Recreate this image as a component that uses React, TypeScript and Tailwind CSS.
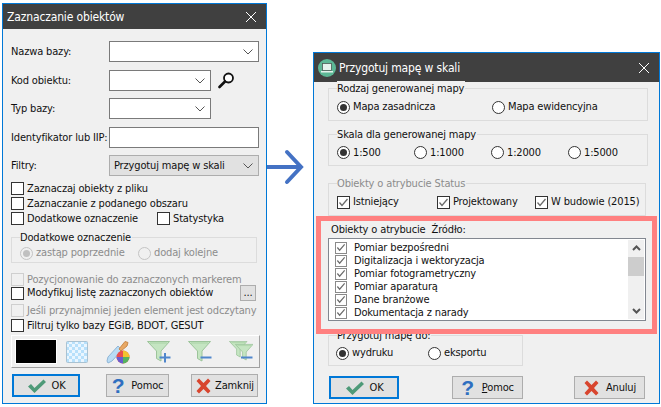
import React from "react";

const Chev = () => (
  <svg width="10" height="6" viewBox="0 0 10 6" className="shrink-0"><path d="M0.5 0.5 L5 5 L9.5 0.5" fill="none" stroke="#555" strokeWidth="1" /></svg>
);

const Combo = ({ w, text, gray }: { w: string; text?: string; gray?: boolean }) => (
  <div className={`${w} h-[21px] flex items-center justify-between pl-[4px] pr-[5px] border ${gray ? "bg-[#e1e1e1] border-[#adadad]" : "bg-white border-[#7a7a7a]"}`}>
    <span>{text}</span>
    <Chev />
  </div>
);

const Label = ({ text }: { text: string }) => <span className="w-[98px] shrink-0">{text}</span>;

const Check = ({ on, dim, small }: { on?: boolean; dim?: boolean; small?: boolean }) => (
  <span className={`${small ? "w-[12px] h-[12px] border-[#8a8a8a]" : "w-[13px] h-[13px]"} ${dim ? "border-[#cfcfcf] bg-[#f0f0f0]" : small ? "bg-white" : "border-[#333] bg-white"} border shrink-0 flex items-center justify-center`}>
    {on && (
      <svg width="11" height="11" viewBox="0 0 11 11"><path d="M1.5 5.5 L4 8.5 L9.5 2" fill="none" stroke="#6b6b6b" strokeWidth="1.3" /></svg>
    )}
  </span>
);

const CheckRow = ({ text, dim, cls }: { text: string; dim?: boolean; cls?: string }) => (
  <div className={`flex items-center h-[13px] gap-[3px] ${dim ? "text-[#8c8c8c]" : ""} ${cls ?? ""}`}>
    <Check dim={dim} />
    <span>{text}</span>
  </div>
);

const Radio = ({ on, dim, text, cls }: { on?: boolean; dim?: boolean; text: string; cls?: string }) => (
  <div className={`flex items-center gap-[3px] ${dim ? "text-[#8c8c8c]" : ""} ${cls ?? ""}`}>
    <span className={`w-[13px] h-[13px] rounded-full border shrink-0 flex items-center justify-center ${dim ? "border-[#c4c4c4] bg-[#f0f0f0]" : "border-[#333] bg-white"}`}>
      {on && <span className={`w-[7px] h-[7px] rounded-full ${dim ? "bg-[#c0c0c0]" : "bg-[#333]"}`} />}
    </span>
    <span>{text}</span>
  </div>
);

const Group = ({ title, dim, cls, children }: { title: string; dim?: boolean; cls: string; children: React.ReactNode }) => (
  <div className={`relative border border-[#dcdcdc] ${cls}`}>
    <span className={`absolute left-[8px] top-[-8px] leading-[16px] bg-[#f0f0f0] pr-[1px] ${dim ? "text-[#8c8c8c]" : ""}`}>{title}</span>
    {children}
  </div>
);

const CheckIcon = () => (
  <svg width="20" height="16" viewBox="0 0 20 16"><path d="M1 8.5 L4 6 L7.5 10 L16.5 1.5 L19 4 L7.5 15 Z" fill="#4e9a78" /></svg>
);
const XIcon = () => (
  <svg width="17" height="16" viewBox="0 0 17 16"><path d="M1.5 3 L4 0.5 L8.5 5 L13 0.5 L15.5 3 L11 8 L15.5 13 L13 15.5 L8.5 11 L4 15.5 L1.5 13 L6 8 Z" fill="#d8452e" /></svg>
);
const QIcon = () => (
  <span className="text-[#2f6fc0] font-bold text-[21px] leading-[20px] [font-family:'Liberation_Sans',sans-serif]">?</span>
);

const Btn = ({ cls, primary, icon, text, gap }: { cls: string; primary?: boolean; icon: React.ReactNode; text: React.ReactNode; gap: string }) => (
  <div className={`${cls} h-[23px] shrink-0 flex items-center justify-center ${gap} bg-[#e1e1e1] ${primary ? "border-2 border-[#0078d7]" : "border border-[#adadad]"}`}>
    {icon}
    <span>{text}</span>
  </div>
);

const TitleBar = ({ text, icon, h }: { text: string; icon?: React.ReactNode; h: string }) => (
  <div className={`${h} shrink-0 bg-[#404040] text-white flex items-center pl-[4px] pr-[9px] text-[12px]`}>
    {icon}
    <span className="flex-1">{text}</span>
    <svg width="12" height="12" viewBox="0 0 12 12"><path d="M1 1 L11 11 M11 1 L1 11" stroke="#fff" strokeWidth="1" /></svg>
  </div>
);

const Funnel = ({ x = 0, y = 0, s = 1 }: { x?: number; y?: number; s?: number }) => (
  <g transform={`translate(${x} ${y}) scale(${s})`}>
    <path d="M0.5 0.5 H22.5 L14 10 V20 L9.5 17.5 V10 Z" fill="#c5e5c2" stroke="#9cc49a" />
    <path d="M3 2 H20" stroke="#a9d3a6" />
  </g>
);

const items = ["Pomiar bezpośredni", "Digitalizacja i wektoryzacja", "Pomiar fotogrametryczny", "Pomiar aparaturą", "Dane branżowe", "Dokumentacja z narady"];

export default function App() {
  return (
    <div className="relative w-[661px] h-[407px] bg-white overflow-hidden text-[11px] leading-[14px] tracking-[-0.15px] text-[#111] whitespace-nowrap [font-family:'DejaVu_Sans_Condensed','DejaVu_Sans','Liberation_Sans',sans-serif]">
      {/* Left window */}
      <div className="absolute left-[2px] top-[3px] w-[265px] h-[401px] border border-[#0078d7] bg-[#f0f0f0] flex flex-col">
        <TitleBar text="Zaznaczanie obiektów" h="h-[25px]" />
        <div className="pl-[8px] flex flex-col">
          <div className="flex items-center mt-[12px]"><Label text="Nazwa bazy:" /><Combo w="w-[150px]" /></div>
          <div className="flex items-center mt-[8px]">
            <Label text="Kod obiektu:" /><Combo w="w-[102px]" />
            <svg width="17" height="17" viewBox="0 0 17 17" className="ml-[7px]">
              <circle cx="10.5" cy="6" r="4.5" fill="#fff" stroke="#111" strokeWidth="1.8" />
              <path d="M7 9.5 L1.5 15" stroke="#111" strokeWidth="2.6" strokeLinecap="round" />
            </svg>
          </div>
          <div className="flex items-center mt-[7px]"><Label text="Typ bazy:" /><Combo w="w-[102px]" /></div>
          <div className="flex items-center mt-[8px]"><Label text="Identyfikator lub IIP:" /><div className="w-[150px] h-[21px] bg-white border border-[#7a7a7a]" /></div>
          <div className="flex items-center mt-[7px]"><Label text="Filtry:" /><Combo w="w-[150px]" gray text="Przygotuj mapę w skali" /></div>
          <CheckRow text="Zaznaczaj obiekty z pliku" cls="mt-[6px]" />
          <CheckRow text="Zaznaczanie z podanego obszaru" cls="mt-[2px]" />
          <div className="flex mt-[2px]">
            <CheckRow text="Dodatkowe oznaczenie" cls="w-[146px]" />
            <CheckRow text="Statystyka" />
          </div>
          <Group title="Dodatkowe oznaczenie" cls="w-[246px] h-[26px] mt-[12px] flex items-end pb-[2px] pl-[8px]">
            <Radio dim on text="zastąp poprzednie" cls="w-[118px]" />
            <Radio dim text="dodaj kolejne" />
          </Group>
          <CheckRow text="Pozycjonowanie do zaznaczonych markerem" dim cls="mt-[10px]" />
          <div className="flex items-center justify-between w-[245px] mt-[-1px] h-[16px]">
            <CheckRow text="Modyfikuj listę zaznaczonych obiektów" />
            <div className="w-[16px] h-[16px] bg-[#e1e1e1] border border-[#adadad] flex items-center justify-center leading-[12px]">...</div>
          </div>
          <CheckRow text="Jeśli przynajmniej jeden element jest odczytany" dim cls="mt-[3px]" />
          <CheckRow text="Filtruj tylko bazy EGiB, BDOT, GESUT" cls="mt-[2px]" />
          <div className="w-[249px] h-[33px] mt-[3px] border border-t-white border-l-white border-r-[#a0a0a0] border-b-[#a0a0a0] flex items-center pl-[3px]">
            <div className="w-[42px] h-[25px] bg-black border border-white" />
            <svg width="22" height="22" viewBox="0 0 22 22" className="ml-[9px]">
              <defs>
                <pattern id="chk" width="6" height="6" patternUnits="userSpaceOnUse">
                  <rect width="6" height="6" fill="#eaf6ff" />
                  <rect width="3" height="3" fill="#b7e0fb" />
                  <rect x="3" y="3" width="3" height="3" fill="#b7e0fb" />
                </pattern>
              </defs>
              <rect x="0.5" y="0.5" width="21" height="21" rx="1" fill="url(#chk)" stroke="#a9c2d2" />
            </svg>
            <svg width="24" height="24" viewBox="0 0 24 24" className="ml-[18px]">
              <path d="M1 21 L2 17 L12 6 L16 10 L6 21 L2 23 Z" fill="#b9dcf5" stroke="#8fb5d6" />
              <path d="M13 9 L19 1.5 L22 2.5 L21 6 L15 11 Z" fill="#e8a865" stroke="#c98a4c" />
              <circle cx="17" cy="17" r="6.5" fill="#e94f4f" />
              <path d="M17 17 L17 10.5 A6.5 6.5 0 0 1 23.5 17 Z" fill="#f2c230" />
              <path d="M17 17 L23.5 17 A6.5 6.5 0 0 1 17 23.5 Z" fill="#56b35f" />
              <path d="M17 17 L17 23.5 A6.5 6.5 0 0 1 10.5 17 Z" fill="#6a5ccf" />
            </svg>
            <svg width="24" height="22" viewBox="0 0 24 22" className="ml-[17px]">
              <Funnel />
              <path d="M12.5 16.5 H23.5 M18 12 V21.5" stroke="#4f86cc" strokeWidth="2" />
            </svg>
            <svg width="24" height="22" viewBox="0 0 24 22" className="ml-[17px]">
              <Funnel />
              <path d="M12.5 16.5 H23.5" stroke="#4f86cc" strokeWidth="2" />
            </svg>
            <svg width="24" height="22" viewBox="0 0 24 22" className="ml-[17px]">
              <Funnel s={0.8} />
              <Funnel x={6} y={3} s={0.8} />
              <path d="M12 16.5 H23.5" stroke="#4f86cc" strokeWidth="2" />
            </svg>
          </div>
          <div className="flex mt-[6px] pl-[1px]">
            <Btn cls="w-[68px]" primary icon={<CheckIcon />} text="OK" gap="gap-[5px]" />
            <Btn cls="w-[63px] ml-[26px]" icon={<QIcon />} text="Pomoc" gap="gap-[7px]" />
            <Btn cls="w-[67px] ml-[22px]" icon={<XIcon />} text="Zamknij" gap="gap-[3px]" />
          </div>
        </div>
      </div>

      {/* Arrow */}
      <svg width="40" height="50" viewBox="0 0 40 50" className="absolute left-[265px] top-[143px]">
        <path d="M2 24 H37" fill="none" stroke="#4472c4" strokeWidth="4" />
        <path d="M22 9 L36 24 L22 39" fill="none" stroke="#4472c4" strokeWidth="4" strokeLinecap="round" />
      </svg>

      {/* Right window */}
      <div className="absolute left-[313px] top-[52px] w-[347px] h-[352px] border border-[#0078d7] bg-[#f0f0f0] flex flex-col">
        <TitleBar
          h="h-[29px]"
          text="Przygotuj mapę w skali"
          icon={
            <svg width="18" height="18" viewBox="0 0 18 18" className="mr-[3px]">
              <circle cx="9" cy="9" r="9" fill="#5cb795" />
              <rect x="4.5" y="4.5" width="9" height="7" fill="#e4f2ec" stroke="#4b5a55" strokeWidth="0.8" />
              <rect x="3" y="12" width="12" height="1.5" fill="#e4f2ec" />
            </svg>
          }
        />
        <div className="pl-[14px] flex flex-col">
          <Group title="Rodzaj generowanej mapy" cls="w-[320px] h-[33px] mt-[6px] flex items-center pl-[8px] pt-[5px]">
            <Radio on text="Mapa zasadnicza" cls="w-[155px]" />
            <Radio text="Mapa ewidencyjna" />
          </Group>
          <Group title="Skala dla generowanej mapy" cls="w-[320px] h-[32px] mt-[13px] flex items-center pl-[8px] pt-[5px]">
            <Radio on text="1:500" cls="w-[77px]" />
            <Radio text="1:1000" cls="w-[77px]" />
            <Radio text="1:2000" cls="w-[77px]" />
            <Radio text="1:5000" />
          </Group>
          <Group title="Obiekty o atrybucie Status" dim cls="w-[318px] h-[33px] mt-[17px] flex items-center pl-[8px] pt-[5px]">
            <div className="flex items-center gap-[3px] w-[100px]"><Check on /><span>Istniejący</span></div>
            <div className="flex items-center gap-[3px] w-[98px]"><Check on /><span>Projektowany</span></div>
            <div className="flex items-center gap-[3px]"><Check on /><span>W budowie (2015)</span></div>
          </Group>
          <div className="mt-[7px] pl-[3px] h-[14px]">Obiekty o atrybucie&nbsp; Źródło:</div>
          <div className="w-[318px] h-[83px] mt-[1px] bg-white border border-[#828790] flex">
            <div className="flex-1 flex flex-col pl-[6px] pt-[2px]">
              {items.map((t) => (
                <div key={t} className="h-[13px] flex items-center gap-[7px]">
                  <Check on small />
                  <span>{t}</span>
                </div>
              ))}
            </div>
            <div className="relative w-[16px] mr-[1px] my-[1px] bg-[#f0f0f0] flex flex-col items-center justify-between py-[5px]">
              <svg width="9" height="6" viewBox="0 0 9 6"><path d="M1 5 L4.5 1.5 L8 5" fill="none" stroke="#555" strokeWidth="2" /></svg>
              <div className="absolute left-0 top-[17px] w-full h-[19px] bg-[#cdcdcd]" />
              <svg width="9" height="6" viewBox="0 0 9 6"><path d="M1 1 L4.5 4.5 L8 1" fill="none" stroke="#555" strokeWidth="2" /></svg>
            </div>
          </div>
          <Group title="Przygotuj mapę do:" cls="w-[195px] h-[31px] mt-[14px] flex items-center pl-[7px] pt-[5px]">
            <Radio on text="wydruku" cls="w-[92px]" />
            <Radio text="eksportu" />
          </Group>
          <div className="flex mt-[10px] pl-[1px]">
            <Btn cls="w-[70px]" primary icon={<CheckIcon />} text="OK" gap="gap-[5px]" />
            <Btn cls="w-[71px] ml-[53px]" icon={<QIcon />} text={<><span className="underline">P</span>omoc</>} gap="gap-[8px]" />
            <Btn cls="w-[71px] ml-[51px]" icon={<XIcon />} text="Anuluj" gap="gap-[6px]" />
          </div>
        </div>
      </div>

      {/* Highlight overlay */}
      <div className="absolute left-[316px] top-[216px] w-[341px] h-[118px] border-[5px] border-[#ff8080]" />
    </div>
  );
}
